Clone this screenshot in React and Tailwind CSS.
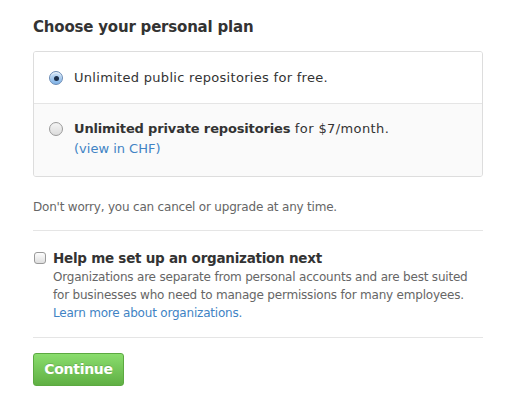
export default function App() {
  const font = { fontFamily: '"DejaVu Sans", Verdana, sans-serif' };
  return (
    <div className="min-h-[401px] w-[509px] bg-white text-[#333]" style={font}>
      <div className="ml-[33px] w-[450px] pt-[17px]">
        {/* Heading */}
        <h2 className="text-[15px] font-bold leading-[20px] tracking-[-0.2px] text-[#333]">Choose your personal plan</h2>

        {/* Plan box */}
        <div className="mt-[14px] overflow-hidden rounded-[3px] border border-[#dddddd]">
          <label className="flex items-start gap-[11px] bg-white px-[15px] pt-[16px] pb-[15px]">
            <span className="mt-[3px] flex h-[14px] w-[14px] shrink-0 items-center justify-center rounded-full border border-[#6a8bb5] bg-gradient-to-b from-[#cfe3f7] to-[#7eb2e6] shadow-[inset_0_1px_1px_rgba(255,255,255,0.8)]">
              <span className="h-[5px] w-[5px] rounded-full bg-[#1d2f4a]" />
            </span>
            <span className="text-[13px] leading-[20px] tracking-[0.3px]">Unlimited public repositories for free.</span>
          </label>
          <label className="flex items-start gap-[11px] border-t border-[#e5e5e5] bg-[#fafafa] px-[15px] pt-[15px] pb-[17px]">
            <span className="mt-[3px] h-[14px] w-[14px] shrink-0 rounded-full border border-[#9a9a9a] bg-gradient-to-b from-[#f4f4f4] to-[#dcdcdc]" />
            <span className="text-[13px] leading-[20px] tracking-[0.4px]">
              <strong className="font-bold tracking-[-0.15px]">Unlimited private repositories</strong> for $7/month.
              <br />
              <a href="#" className="tracking-normal text-[#4183c4]">(view in CHF)</a>
            </span>
          </label>
        </div>

        <p className="mt-[21px] text-[12px] leading-[18px] tracking-[-0.2px] text-[#666]">
          Don't worry, you can cancel or upgrade at any time.
        </p>

        <hr className="mt-[14px] border-0 border-t border-[#e5e5e5]" />

        {/* Organization checkbox */}
        <label className="mt-[17px] flex items-start gap-[7px]">
          <span className="mt-[4px] ml-[1px] h-[12px] w-[12px] shrink-0 rounded-[3px] border border-[#9a9a9a] bg-gradient-to-b from-[#fdfdfd] to-[#dedede]" />
          <span>
            <span className="block text-[13.5px] font-bold leading-[20px] tracking-[-0.25px] text-[#333]">Help me set up an organization next</span>
            <span className="block text-[12px] leading-[18px] tracking-[-0.2px] text-[#666]">
              Organizations are separate from personal accounts and are best suited
              <br />
              for businesses who need to manage permissions for many employees.
              <br />
              <a href="#" className="text-[#4183c4]">Learn more about organizations.</a>
            </span>
          </span>
        </label>

        <hr className="mt-[15px] border-0 border-t border-[#e5e5e5]" />

        <button className="mt-[15px] h-[33px] w-[91px] rounded-[3px] border border-[#5ca941] bg-gradient-to-b from-[#8add6d] to-[#60b044] text-[14px] font-bold tracking-[-0.3px] text-white [text-shadow:0_-1px_0_rgba(0,0,0,0.15)]">
          Continue
        </button>
      </div>
    </div>
  );
}
